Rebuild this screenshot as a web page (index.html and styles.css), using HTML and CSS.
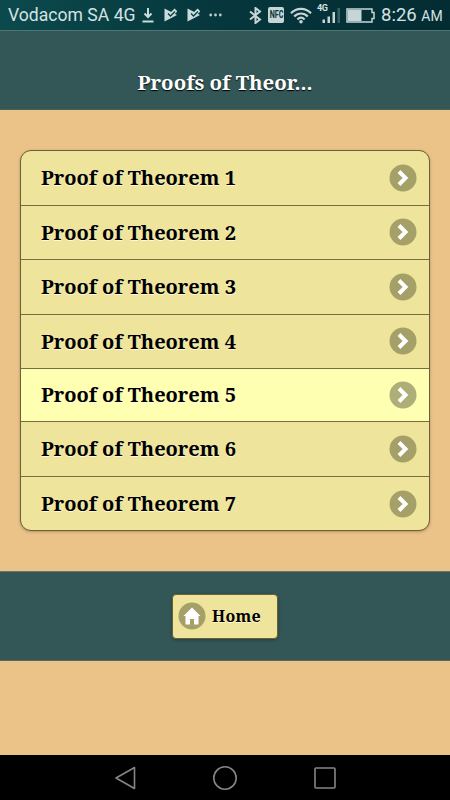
FILE: index.html
```html
<!DOCTYPE html>
<html>
<head>
 <meta charset="utf-8">
 <meta name="viewport" content="width=device-width, initial-scale=1.0">
 <title>Proofs of Theorems</title>
 <link rel="stylesheet" href="styles.css">
</head>
<body>
<!-- Status bar -->
<div class="StatusBar">
 <span class="Carrier">Vodacom SA 4G</span>
 <svg class="IconDownload" width="12" height="16" viewBox="0 0 12 16"><path d="M6 1v9M2.5 6.500L6 10 9.500 6.500M.5 14.500h11" fill="none" stroke="#c9dcdc" stroke-width="2"/></svg>
 <svg class="IconPlay" width="13" height="14" viewBox="0 0 13 14"><path d="M.5.5L13 7 .5 13.500z" fill="#c9dcdc"/><path d="M3.500 4.500L6.500 7.500 12 2" fill="none" stroke="#c9dcdc" stroke-width="4"/><path d="M4 5.500l2.500 2.500L11 3.500" fill="none" stroke="#083e42" stroke-width="1.300"/></svg>
 <svg class="IconPlay" width="13" height="14" viewBox="0 0 13 14"><path d="M.5.5L13 7 .5 13.500z" fill="#c9dcdc"/><path d="M3.500 4.500L6.500 7.500 12 2" fill="none" stroke="#c9dcdc" stroke-width="4"/><path d="M4 5.500l2.500 2.500L11 3.500" fill="none" stroke="#083e42" stroke-width="1.300"/></svg>
 <svg class="IconMore" width="13" height="4" viewBox="0 0 13 4"><g fill="#b9cccc"><circle cx="1.700" cy="2" r="1.400"/><circle cx="6.500" cy="2" r="1.400"/><circle cx="11.300" cy="2" r="1.400"/></g></svg>
 <div class="StatusRight">
  <svg width="13" height="17" viewBox="0 0 13 17"><path d="M1 4.500l10 8-4.500 3.500V1L11 4.500l-10 8" fill="none" stroke="#c6d6d7" stroke-width="2"/></svg>
  <span class="Nfc"><span>NFC</span></span>
  <svg class="IconWifi" width="22" height="17" viewBox="0 0 22 17"><g fill="none" stroke="#c6d6d7" stroke-width="2.200"><path d="M1 6.200C6.500 .4 15.500 .4 21 6.200"/><path d="M4.200 9.500c4-4 9.600-4 13.600 0"/><path d="M7.400 12.500c2.200-2.200 5-2.200 7.200 0"/></g><circle cx="11" cy="14.800" r="1.800" fill="#c6d6d7"/></svg>
  <svg class="IconSignal" width="26" height="20" viewBox="0 0 26 20"><text class="SignalText" x="1" y="8" textLength="11">4G</text><path d="M6.500 16.500H9V20H6.500zM11.500 13.500H14V20h-2.500zM16.500 9H19v11h-2.500z" fill="#c6d6d7"/><path d="M21.500 5H24v15h-2.500z" fill="#3a6066"/></svg>
  <svg class="IconBattery" width="29" height="15" viewBox="0 0 29 15"><path d="M1 1h25v3.500h2v6h-2V14H1z" fill="none" stroke="#c6d6d7" stroke-width="1.500"/><path d="M2 2H15.500v11H2z" fill="#c6d6d7"/></svg>
  <span class="Clock">8:26 <small>AM</small></span>
 </div>
</div>

<div class="Header">
 <h1>Proofs of Theor...</h1>
</div>

<ul class="ProofList">
 <li><span>Proof of Theorem 1</span><svg class="Arrow" viewBox="0 0 28 28"><circle cx="14" cy="14" r="13.500"/><path d="M10 7.500l6.500 6.500-6.500 6.500"/></svg></li>
 <li><span>Proof of Theorem 2</span><svg class="Arrow" viewBox="0 0 28 28"><circle cx="14" cy="14" r="13.500"/><path d="M10 7.500l6.500 6.500-6.500 6.500"/></svg></li>
 <li><span>Proof of Theorem 3</span><svg class="Arrow" viewBox="0 0 28 28"><circle cx="14" cy="14" r="13.500"/><path d="M10 7.500l6.500 6.500-6.500 6.500"/></svg></li>
 <li><span>Proof of Theorem 4</span><svg class="Arrow" viewBox="0 0 28 28"><circle cx="14" cy="14" r="13.500"/><path d="M10 7.500l6.500 6.500-6.500 6.500"/></svg></li>
 <li class="Active"><span>Proof of Theorem 5</span><svg class="Arrow" viewBox="0 0 28 28"><circle cx="14" cy="14" r="13.500"/><path d="M10 7.500l6.500 6.500-6.500 6.500"/></svg></li>
 <li><span>Proof of Theorem 6</span><svg class="Arrow" viewBox="0 0 28 28"><circle cx="14" cy="14" r="13.500"/><path d="M10 7.500l6.500 6.500-6.500 6.500"/></svg></li>
 <li><span>Proof of Theorem 7</span><svg class="Arrow" viewBox="0 0 28 28"><circle cx="14" cy="14" r="13.500"/><path d="M10 7.500l6.500 6.500-6.500 6.500"/></svg></li>
</ul>

<div class="Footer">
 <button type="button" class="HomeButton">
  <svg width="28" height="28" viewBox="0 0 28 28"><circle cx="14" cy="14" r="13.500" fill="#a5a068"/><path d="M14 5.500L22.500 14H20.500v8.500h-4.500V17h-4v5.500H7.500V14H5.500z" fill="#fff"/></svg>
  <span>Home</span>
 </button>
</div>

<!-- Android buttons -->
<div class="NavBar">
 <svg width="22" height="24" viewBox="0 0 22 24"><path d="M19.500 1.500v21L1 12z"/></svg>
 <svg width="24" height="24" viewBox="0 0 24 24"><circle cx="12" cy="12" r="11.200"/></svg>
 <svg width="24" height="24" viewBox="0 0 24 24"><rect x="2" y="2" width="20" height="20" rx="1"/></svg>
</div>
</body>
</html>
```

FILE: styles.css
```css
* {
 box-sizing:border-box;
}
body {
 display:flex;
 flex-direction:column;
 height:800px;
 margin:0;
 background-color:#ebc389;
 font-family:"Noto Serif", "Droid Serif", "DejaVu Serif Condensed", "DejaVu Serif", serif;
}

/* Status bar */
.StatusBar {
 display:flex;
 align-items:center;
 height:30px;
 padding:0 8px 0 8px;
 background:linear-gradient(100deg, #0c4a4d, #06383d 45%, #032b32);
 color:#d3e3e3;
 font-family:Roboto, sans-serif;
}
.Carrier {
 width:127px;
 font-size:17.6px;
 white-space:nowrap;
}
.IconDownload {
 margin-left:7px;
}
.IconPlay {
 margin-left:10px;
}
.IconMore {
 margin-left:9px;
}
.StatusRight {
 display:flex;
 align-items:center;
 margin-left:auto;
}
.Nfc {
 display:flex;
 align-items:center;
 justify-content:center;
 width:16px;
 height:16px;
 margin-left:6px;
 border-radius:2px;
 background:#c6d6d7;
 color:#06353b;
 font-size:11px;
 font-weight:bold;
 line-height:14px;
}
.Nfc span {
 transform:scaleX(.65);
}
.IconWifi {
 margin-left:6px;
}
.IconSignal {
 margin:-4px 0 0 4px;
}
.SignalText {
 fill:#d3e3e3;
 font-size:9px;
 font-weight:bold;
}
.IconBattery {
 margin-left:4px;
}
.Clock {
 width:61px;
 margin-left:6px;
 font-size:18.5px;
 white-space:nowrap;
}
.Clock small {
 font-size:14px;
}

.Header {
 height:80px;
 padding-top:38px;
 border-top:1px solid #4d7775;
 border-bottom:1px solid #4f5f4c;
 background:#325756;
}
.Header h1 {
 margin:0;
 color:#fff;
 font-size:20.4px;
 line-height:27px;
 text-align:center;
 text-shadow:0 1px 1px #000;
}

/* List */
.ProofList {
 display:grid;
 grid-template-rows:55px 54px 55px 54px 53px 55px 53px;
 height:381px;
 margin:40px 20px;
 padding:0;
 overflow:hidden;
 border:1px solid #6b6036;
 border-radius:11px;
 background:#eee49b;
 box-shadow:0 1px 3px rgba(0,0,0,.25);
 list-style:none;
}
.ProofList li {
 display:flex;
 align-items:center;
 justify-content:space-between;
 padding:0 12px 1px 20px;
 border-bottom:1px solid #776c42;
 color:#000;
 font-size:20px;
 font-weight:bold;
 text-shadow:0 1px 0 #fff8d0;
}
.ProofList li:last-child {
 padding-bottom:0;
 border-bottom:0;
}
.ProofList .Active {
 background:#ffffb2;
}
.Arrow {
 width:28px;
 height:28px;
}
.Arrow circle {
 fill:#a5a068;
}
.Active .Arrow circle {
 fill:#aeae79;
}
.Arrow path {
 fill:none;
 stroke:#fff;
 stroke-width:4;
}

.Footer {
 display:flex;
 justify-content:center;
 height:90px;
 padding-top:22px;
 border-top:1px solid #697a61;
 border-bottom:1px solid #596a54;
 background:#325756;
}
.HomeButton {
 display:flex;
 align-items:center;
 gap:6px;
 width:106px;
 height:45px;
 padding:0 5px 2px;
 border:1px solid #6b6036;
 border-radius:4px;
 background:#eee49b;
 box-shadow:0 1px 3px rgba(0,0,0,.3);
 color:#000;
 font-family:inherit;
 font-size:16px;
 font-weight:bold;
 letter-spacing:.3px;
 text-shadow:0 1px 0 #fff8d0;
}

.NavBar {
 display:flex;
 align-items:center;
 justify-content:center;
 gap:76px;
 height:45px;
 margin-top:auto;
 padding-left:2px;
 background:#000;
}
.NavBar svg {
 fill:none;
 stroke:#858585;
 stroke-width:1.6;
 stroke-linejoin:round;
}
```
